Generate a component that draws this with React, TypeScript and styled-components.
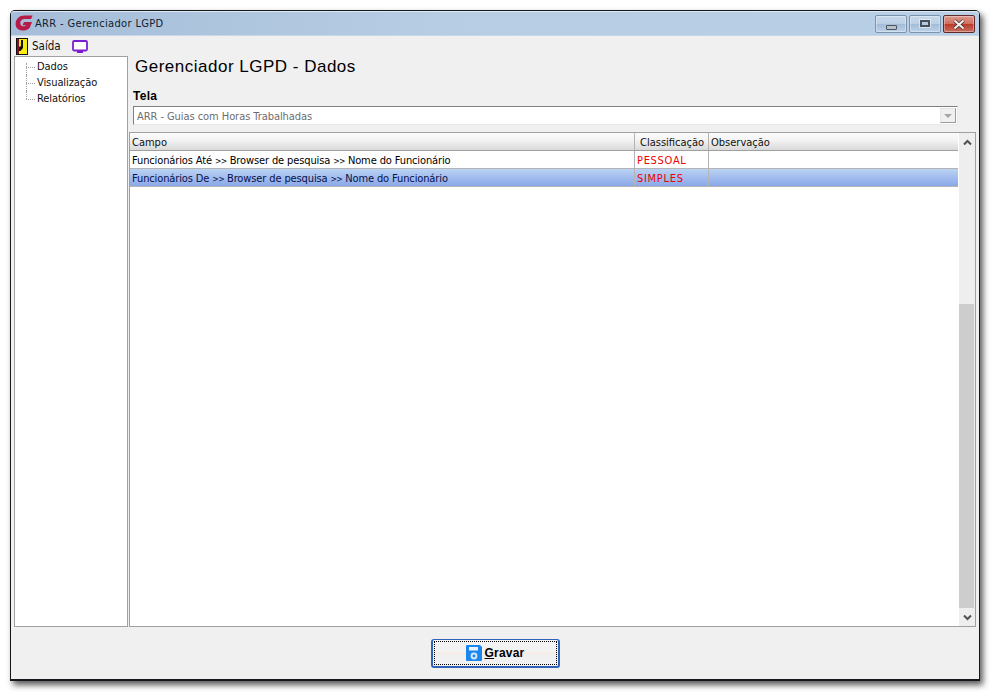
import styled, { createGlobalStyle } from "styled-components"

const uiFont = `"DejaVu Sans Condensed", "Liberation Sans", Arial, sans-serif`

const GlobalStyle = createGlobalStyle`
  html, body {
    margin: 0;
    padding: 0;
    background: #ffffff;
  }
  body {
    font-family: ${uiFont};
    font-size: 11px;
    color: #000000;
  }
`

const Desktop = styled.div`
  width: 991px;
  height: 692px;
  padding: 10px 0 0 10px;
  box-sizing: border-box;
  overflow: hidden;
`

const Window = styled.div`
  width: 970px;
  height: 671px;
  box-sizing: border-box;
  display: flex;
  flex-direction: column;
  background: #f0f0f0;
  border: 1px solid #14181c;
  border-radius: 5px 5px 0 0;
  border-bottom-width: 2px;
  box-shadow: 3px 4px 6px rgba(0, 0, 0, 0.65);
`

const TitleBar = styled.div`
  height: 25px;
  flex: none;
  box-sizing: border-box;
  display: flex;
  align-items: center;
  padding: 0 4px 0 4px;
  background: linear-gradient(90deg, #a5bdd8 0%, #b7cde4 45%, #b9cfe6 100%);
  border-radius: 4px 4px 0 0;
  border-bottom: 1px solid #c8d8e8;
  box-shadow: inset 0 1px 0 #dfe9f3;
`

const TitleText = styled.span`
  margin-left: 2px;
  font-size: 11px;
  letter-spacing: 0.35px;
  color: #10202e;
  flex: 1;
`

const Controls = styled.div`
  display: flex;
  gap: 2px;
  align-self: flex-start;
  margin-top: 4px;
`

const ControlButton = styled.div<{ $close?: boolean }>`
  width: 32px;
  height: 18px;
  box-sizing: border-box;
  display: flex;
  align-items: center;
  justify-content: center;
  border-radius: 2px;
  border: 1px solid ${(p) => (p.$close ? "#5e2a2c" : "#7c93ad")};
  background: ${(p) =>
    p.$close
      ? "linear-gradient(180deg, #dc9a8e 0%, #cf6f60 48%, #bb3a2a 52%, #c9705f 100%)"
      : "linear-gradient(180deg, #c6d8ea 0%, #bcd0e5 48%, #a3bcd8 52%, #bcd2e8 100%)"};
  box-shadow: inset 0 0 0 1px rgba(255, 255, 255, 0.35);
`

const MinGlyph = styled.div`
  width: 9px;
  height: 3px;
  margin-top: 6px;
  background: #b8bfc8;
  border: 1px solid #4a5561;
  border-radius: 1px;
`

const MaxGlyph = styled.div`
  width: 6px;
  height: 3px;
  margin-bottom: 2px;
  background: #b7c9dc;
  border: 2px solid #46505c;
  box-shadow: 0 0 0 1px rgba(255, 255, 255, 0.5);
`

const MenuBar = styled.div`
  height: 20px;
  flex: none;
  display: flex;
  align-items: center;
  padding-left: 5px;
  background: #f0f0f0;
  font-size: 11.5px;
`

const MenuLabel = styled.span`
  margin-left: 4px;
  margin-right: 11px;
  color: #101010;
`

const Body = styled.div`
  flex: 1;
  min-height: 0;
  display: flex;
  padding-left: 3px;
  padding-right: 3px;
  gap: 1px;
`

const TreePanel = styled.div`
  width: 114px;
  flex: none;
  box-sizing: border-box;
  border: 1px solid #a0a0a0;
  background: #ffffff;
  padding-top: 2px;
`

const TreeItem = styled.div<{ $first?: boolean; $last?: boolean }>`
  position: relative;
  height: 16px;
  line-height: 16px;
  padding-left: 22px;
  font-size: 11px;
  letter-spacing: -0.08px;
  color: #111111;
  &::before {
    content: "";
    position: absolute;
    left: 11px;
    top: 8px;
    width: 9px;
    border-top: 1px dotted #a0a0a0;
  }
  &::after {
    content: "";
    position: absolute;
    left: 11px;
    top: ${(p) => (p.$first ? 4 : 0)}px;
    height: ${(p) => (p.$last ? 8 : p.$first ? 12 : 16)}px;
    border-left: 1px dotted #a0a0a0;
  }
`

const Main = styled.div`
  flex: 1;
  min-width: 0;
  display: flex;
  flex-direction: column;
`

const Heading = styled.h1`
  margin: 0;
  padding: 1px 0 0 6px;
  height: 30px;
  line-height: 20px;
  font-family: "Liberation Sans", Arial, sans-serif;
  font-size: 17px;
  font-weight: 400;
  letter-spacing: 0.5px;
  color: #000000;
`

const FieldLabel = styled.div`
  height: 19px;
  line-height: 18px;
  padding-left: 4px;
  font-family: "Liberation Sans", Arial, sans-serif;
  font-size: 12px;
  font-weight: 700;
  letter-spacing: 0.3px;
`

const Combo = styled.div`
  margin-left: 4px;
  width: 825px;
  height: 19px;
  box-sizing: border-box;
  display: flex;
  align-items: center;
  justify-content: space-between;
  background: #ffffff;
  border: 1px solid;
  border-color: #7f7f7f #e8e8e8 #e8e8e8 #7f7f7f;
  padding-left: 3px;
  font-size: 11px;
  letter-spacing: -0.06px;
  color: #6d6d6d;
`

const ComboText = styled.span`
  margin-top: 2px;
`

const ComboArrow = styled.div`
  width: 16px;
  height: 15px;
  margin-right: 1px;
  display: flex;
  align-items: center;
  justify-content: center;
  box-sizing: border-box;
  background: #f0f0f0;
  border: 1px solid;
  border-color: #e4e4e4 #9a9a9a #9a9a9a #e4e4e4;
  &::after {
    content: "";
    border-left: 4px solid transparent;
    border-right: 4px solid transparent;
    border-top: 4px solid #a6a6a6;
  }
`

const GridBox = styled.div`
  flex: 1;
  min-height: 0;
  margin-top: 7px;
  display: flex;
  box-sizing: border-box;
  border: 1px solid #a0a0a0;
  background: #ffffff;
`

const Table = styled.div`
  flex: 1;
  min-width: 0;
`

const Row = styled.div<{ $selected?: boolean }>`
  height: 18px;
  box-sizing: border-box;
  display: grid;
  grid-template-columns: 505px 74px 1fr;
  line-height: 19px;
  font-size: 11px;
  color: ${(p) => (p.$selected ? "#08104a" : "#000000")};
  background: ${(p) =>
    p.$selected ? "linear-gradient(180deg, #bad2f3 0%, #8aa8e8 100%)" : "#ffffff"};
  border-bottom: 1px solid #b4b4b4;
`

const HeaderRow = styled(Row)`
  background: linear-gradient(180deg, #fbfbfb 0%, #f4f4f4 40%, #d9d9d9 100%);
  border-bottom: 1px solid #a0a0a0;
  color: #101010;
`

const Cell = styled.div<{ $tone?: "red"; $indent?: number }>`
  padding-left: ${(p) => p.$indent ?? 2}px;
  white-space: nowrap;
  overflow: hidden;
  border-right: 1px solid #b4b4b4;
  color: ${(p) => (p.$tone === "red" ? "#f00000" : "inherit")};
  letter-spacing: ${(p) => (p.$tone === "red" ? "0.7px" : "0")};
  &:last-child {
    border-right: none;
  }
`

const FieldPath = styled.span`
  letter-spacing: -0.12px;
`

const PathSeparator = styled.span`
  font-size: 8.5px;
  letter-spacing: -0.6px;
`

const ScrollBar = styled.div`
  width: 17px;
  flex: none;
  display: flex;
  flex-direction: column;
  background: #eeeeee;
  border-left: 1px solid #ffffff;
  box-sizing: border-box;
`

const ScrollButton = styled.div`
  height: 18px;
  flex: none;
  display: flex;
  align-items: center;
  justify-content: center;
  color: #505050;
`

const ScrollTrack = styled.div`
  flex: 1;
  display: flex;
  flex-direction: column;
  justify-content: flex-end;
`

const ScrollThumb = styled.div`
  height: 304px;
  width: 15px;
  background: #cdcdcd;
`

const Footer = styled.div`
  height: 52px;
  flex: none;
  display: flex;
  align-items: center;
  justify-content: center;
`

const SaveButton = styled.button`
  position: relative;
  width: 129px;
  height: 29px;
  margin-top: 1px;
  box-sizing: border-box;
  display: flex;
  align-items: center;
  justify-content: center;
  gap: 3px;
  padding: 0;
  border: 2px solid #2f62b8;
  border-top-width: 1px;
  border-radius: 3px;
  background: linear-gradient(180deg, #f4f4f4 0%, #f2f2f2 45%, #f9ebe6 48%, #f0f0f0 60%, #f2f2f2 100%);
  font-family: "Liberation Sans", Arial, sans-serif;
  font-size: 12px;
  font-weight: 700;
  letter-spacing: 0.2px;
  color: #000000;
  &::after {
    content: "";
    position: absolute;
    inset: 1px;
    border: 1px dotted #000000;
  }
  u {
    text-decoration-thickness: 1px;
  }
`

const Logo = () => (
  <svg width="18" height="16" viewBox="0 0 18 16">
    <path
      d="M17.6 0.5 L16 4 H9.4 C7.2 4 5.6 5.5 5.3 7.5 C5 9.8 6.3 11.3 8.3 11.3 C9.6 11.3 10.6 10.9 11.1 10.2 H7.5 L9 7 H17 L14.6 13 C12.6 15 10 15.6 7.6 15.6 C3 15.6 0.4 12.5 0.6 8.6 C0.9 3.8 4.4 0.5 9.5 0.5 Z"
      fill="#b81a48"
    />
  </svg>
)

const ExitIcon = () => (
  <svg width="12" height="17" viewBox="0 0 12 17">
    <rect x="0" y="0" width="12" height="17" fill="#111111" />
    <rect x="1" y="1" width="2" height="15" fill="#8a1020" />
    <rect x="3" y="1" width="8" height="15" fill="#f6ee10" />
    <path d="M5 2 H7 V10 L4.5 13 H3 V9 L5 8 Z" fill="#111111" />
  </svg>
)

const MonitorIcon = () => (
  <svg width="16" height="13" viewBox="0 0 16 13">
    <rect x="1" y="1" width="14" height="9.5" rx="1.2" fill="#ffffff" stroke="#7a1fd0" strokeWidth="1.8" />
    <rect x="5" y="11" width="6" height="2" fill="#7a1fd0" />
  </svg>
)

const DiskIcon = () => (
  <svg width="16" height="16" viewBox="0 0 16 16">
    <path d="M1 0 H14 L16 2 V15 Q16 16 15 16 H1 Q0 16 0 15 V1 Q0 0 1 0 Z" fill="#1b86ec" />
    <rect x="3" y="2" width="9" height="3.5" fill="#e8f3fe" />
    <circle cx="8" cy="11" r="3.4" fill="#d5e8fb" />
    <circle cx="8" cy="11" r="1.4" fill="#1b86ec" />
  </svg>
)

const Chevron = ({ up }: { up?: boolean }) => (
  <svg width="9" height="7" viewBox="0 0 9 7">
    <path
      d={up ? "M1 5.5 L4.5 2 L8 5.5" : "M1 1.5 L4.5 5 L8 1.5"}
      fill="none"
      stroke="currentColor"
      strokeWidth="2"
    />
  </svg>
)

const rows = [
  { campo: ["Funcionários Até", "Browser de pesquisa", "Nome do Funcionário"], tipo: "PESSOAL" },
  { campo: ["Funcionários De", "Browser de pesquisa", "Nome do Funcionário"], tipo: "SIMPLES", selected: true },
]

const App = () => {
  return (
    <Desktop>
      <GlobalStyle />
      <Window>
        <TitleBar>
          <Logo />
          <TitleText>ARR - Gerenciador LGPD</TitleText>
          <Controls>
            <ControlButton><MinGlyph /></ControlButton>
            <ControlButton><MaxGlyph /></ControlButton>
            <ControlButton $close>
              <svg width="14" height="11" viewBox="0 0 14 11">
                <path d="M2.5 1.5 L11.5 9.5 M11.5 1.5 L2.5 9.5" stroke="#3d2a2a" strokeWidth="3.6" />
                <path d="M2.5 1.5 L11.5 9.5 M11.5 1.5 L2.5 9.5" stroke="#f2eeee" strokeWidth="2.2" />
              </svg>
            </ControlButton>
          </Controls>
        </TitleBar>
        <MenuBar>
          <ExitIcon />
          <MenuLabel>Saída</MenuLabel>
          <MonitorIcon />
        </MenuBar>
        <Body>
          <TreePanel>
            <TreeItem $first>Dados</TreeItem>
            <TreeItem>Visualização</TreeItem>
            <TreeItem $last>Relatórios</TreeItem>
          </TreePanel>
          <Main>
            <Heading>Gerenciador LGPD - Dados</Heading>
            <FieldLabel>Tela</FieldLabel>
            <Combo>
              <ComboText>ARR - Guias com Horas Trabalhadas</ComboText>
              <ComboArrow />
            </Combo>
            <GridBox>
              <Table>
                <HeaderRow>
                  <Cell>Campo</Cell>
                  <Cell $indent={5}>Classificação</Cell>
                  <Cell>Observação</Cell>
                </HeaderRow>
                {rows.map((row) => (
                  <Row key={row.tipo} $selected={row.selected}>
                    <Cell>
                      <FieldPath>
                        {row.campo[0]} <PathSeparator>&gt;&gt;</PathSeparator> {row.campo[1]}{" "}
                        <PathSeparator>&gt;&gt;</PathSeparator> {row.campo[2]}
                      </FieldPath>
                    </Cell>
                    <Cell $tone="red">{row.tipo}</Cell>
                    <Cell />
                  </Row>
                ))}
              </Table>
              <ScrollBar>
                <ScrollButton><Chevron up /></ScrollButton>
                <ScrollTrack><ScrollThumb /></ScrollTrack>
                <ScrollButton><Chevron /></ScrollButton>
              </ScrollBar>
            </GridBox>
          </Main>
        </Body>
        <Footer>
          <SaveButton>
            <DiskIcon />
            <span><u>G</u>ravar</span>
          </SaveButton>
        </Footer>
      </Window>
    </Desktop>
  )
}

export default App
